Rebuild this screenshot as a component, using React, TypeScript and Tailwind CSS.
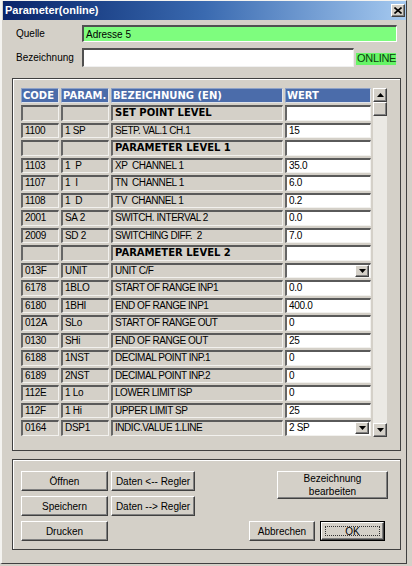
import React from 'react';

interface Row {
  code?: string;
  param?: string;
  name: string;
  value?: string;
  section?: boolean;
  drop?: boolean;
}

const rows: Row[] = [
  { name: 'SET POINT LEVEL', section: true },
  { code: '1100', param: '1 SP', name: 'SETP. VAL.1 CH.1', value: '15' },
  { name: 'PARAMETER LEVEL 1', section: true },
  { code: '1103', param: '1  P', name: 'XP  CHANNEL 1', value: '35.0' },
  { code: '1107', param: '1  I', name: 'TN  CHANNEL 1', value: '6.0' },
  { code: '1108', param: '1  D', name: 'TV  CHANNEL 1', value: '0.2' },
  { code: '2001', param: 'SA 2', name: 'SWITCH. INTERVAL 2', value: '0.0' },
  { code: '2009', param: 'SD 2', name: 'SWITCHING DIFF.  2', value: '7.0' },
  { name: 'PARAMETER LEVEL 2', section: true },
  { code: '013F', param: 'UNIT', name: 'UNIT C/F', value: '', drop: true },
  { code: '6178', param: '1BLO', name: 'START OF RANGE INP1', value: '0.0' },
  { code: '6180', param: '1BHI', name: 'END OF RANGE INP1', value: '400.0' },
  { code: '012A', param: 'SLo', name: 'START OF RANGE OUT', value: '0' },
  { code: '0130', param: 'SHi', name: 'END OF RANGE OUT', value: '25' },
  { code: '6188', param: '1NST', name: 'DECIMAL POINT INP.1', value: '0' },
  { code: '6189', param: '2NST', name: 'DECIMAL POINT INP.2', value: '0' },
  { code: '112E', param: '1 Lo', name: 'LOWER LIMIT ISP', value: '0' },
  { code: '112F', param: '1 Hi', name: 'UPPER LIMIT SP', value: '25' },
  { code: '0164', param: 'DSP1', name: 'INDIC.VALUE 1.LINE', value: '2 SP', drop: true },
];

const cell =
  'h-[15.5px] flex items-center pl-[2px] whitespace-pre border-t-2 border-l-2 border-t-[#5a5a5a] border-l-[#666666] border-b border-r border-b-[#f2f1ee] border-r-[#f2f1ee] text-[10px] leading-none text-black overflow-hidden';

const raised =
  'bg-[#d4d0c8] border border-t-white border-l-white border-r-[#404040] border-b-[#404040] shadow-[inset_-1px_-1px_0_#808080]';

function Arrow({ up }: { up?: boolean }) {
  return (
    <svg width="7" height="4" viewBox="0 0 7 4">
      <path d={up ? 'M3.5 0 L7 4 L0 4 Z' : 'M0 0 L7 0 L3.5 4 Z'} fill="#000" />
    </svg>
  );
}

function Btn({ children, className }: { children: React.ReactNode; className: string }) {
  return (
    <div className={`${raised} flex items-center justify-center text-[10px] leading-[13px] text-black text-center ${className}`}>
      {children}
    </div>
  );
}

export default function App() {
  return (
    <div className="w-[412px] h-[566px] bg-[#d4d0c8] font-['Liberation_Sans',Arial,sans-serif] overflow-hidden">
      <div className="w-[407px] h-[564px] border-r border-b border-r-[#404040] border-b-[#404040] border-l-2 border-t border-l-[#f4f3f0] border-t-[#f4f3f0] pl-px">
        {/* Title bar */}
        <div className="h-[19px] w-[403px] bg-gradient-to-r from-[#0a246a] via-[#3a6ab0] to-[#a6caf0] flex items-center justify-between pl-[2px] pr-[1px]">
          <span className="text-white font-bold text-[11px]">Parameter(online)</span>
          <div className={`${raised} w-[14px] h-[13px] flex items-center justify-center`}>
            <svg width="8" height="7" viewBox="0 0 8 7">
              <path d="M0.5 0.5 L7.5 6.5 M7.5 0.5 L0.5 6.5" stroke="#000" strokeWidth="1.6" />
            </svg>
          </div>
        </div>

        {/* Quelle */}
        <div className="flex items-center mt-[5px] h-[17px]">
          <span className="w-[79px] pl-[13px] text-[10px] text-black">Quelle</span>
          <div className="w-[315px] h-[17px] bg-[#7efd7e] border-t-2 border-l-2 border-t-[#505050] border-l-[#505050] border-b border-r border-b-white border-r-white flex items-center pl-[2px] text-[10px] text-black">
            Adresse 5
          </div>
        </div>

        {/* Bezeichnung */}
        <div className="flex items-center mt-[6px] h-[19px]">
          <span className="w-[79px] pl-[13px] text-[10px] text-black">Bezeichnung</span>
          <div className="w-[272px] h-[19px] bg-white border-t-2 border-l-2 border-t-[#505050] border-l-[#505050] border-b border-r border-b-[#f0f0f0] border-r-[#f0f0f0]" />
          <div className="ml-[2px] mt-[2px] w-[40px] h-[12px] bg-[#66f566] flex items-center pl-[1px] text-[11px] leading-none text-[#0b3d0b] tracking-[-0.3px]">
            ONLINE
          </div>
        </div>

        {/* Table group */}
        <div className="ml-[9px] mt-[11px] w-[389px] h-[373px] border border-[#404040] shadow-[inset_1px_1px_0_#ffffff] pl-[8px] pt-[9px] flex gap-[2px]">
          <div className="grid grid-cols-[38px_48px_172px_86px] gap-x-[2px] gap-y-[2px] content-start">
            {['CODE', 'PARAM.', 'BEZEICHNUNG (EN)', 'WERT'].map((h) => (
              <div
                key={h}
                className="h-[15px] bg-[#4b6caa] border border-t-[#8ea2c8] border-l-[#8ea2c8] border-b-[#dfe3ea] border-r-[#dfe3ea] flex items-center pl-px text-white font-bold text-[10px] leading-none font-['DejaVu_Sans',sans-serif]"
              >
                {h}
              </div>
            ))}
            {rows.map((r, i) => (
              <React.Fragment key={i}>
                <div className={`${cell} bg-[#d4d0c8] tracking-[-0.3px]`}>{r.code}</div>
                <div className={`${cell} bg-[#d4d0c8] tracking-[-0.3px]`}>{r.param}</div>
                <div
                  className={`${cell} bg-[#d4d0c8] ${
                    r.section ? "font-bold font-['DejaVu_Sans',sans-serif]" : 'tracking-[-0.45px]'
                  }`}
                >
                  {r.name}
                </div>
                <div className={`${cell} bg-white justify-between pr-[1px] tracking-[-0.3px]`}>
                  <span>{r.value}</span>
                  {r.drop && (
                    <div className={`${raised} w-[14px] h-[12px] flex items-center justify-center`}>
                      <Arrow />
                    </div>
                  )}
                </div>
              </React.Fragment>
            ))}
          </div>

          {/* Scrollbar */}
          <div className="w-[14px] h-[349px] flex flex-col bg-[#ebe9e4]">
            <div className={`${raised} h-[14px] flex items-center justify-center`}>
              <Arrow up />
            </div>
            <div className={`${raised} h-[14px]`} />
            <div className="flex-1" />
            <div className={`${raised} h-[14px] flex items-center justify-center`}>
              <Arrow />
            </div>
          </div>
        </div>

        {/* Button group */}
        <div className="ml-[9px] mt-[8px] w-[389px] h-[91px] border border-[#404040] shadow-[inset_1px_1px_0_#ffffff] pl-[8px] pt-[11px] flex">
          <div className="grid grid-cols-[87px_84px] gap-x-[3px] gap-y-[5px] content-start">
            <Btn className="h-[20px]">Öffnen</Btn>
            <Btn className="h-[20px]">Daten &lt;-- Regler</Btn>
            <Btn className="h-[20px]">Speichern</Btn>
            <Btn className="h-[20px]">Daten --&gt; Regler</Btn>
            <Btn className="h-[20px]">Drucken</Btn>
          </div>
          <div className="flex-1 flex flex-col items-end pr-[12px]">
            <Btn className="w-[111px] h-[28px]">
              Bezeichnung
              <br />
              bearbeiten
            </Btn>
            <div className="flex gap-[5px] mt-[22px] mr-[3px]">
              <Btn className="w-[66px] h-[20px]">Abbrechen</Btn>
              <div className="w-[65px] h-[20px] border border-black">
                <div className={`${raised} w-full h-full p-[3px]`}>
                  <div className="w-full h-full border border-dotted border-[#333] flex items-center justify-center text-[10px] text-black">
                    OK
                  </div>
                </div>
              </div>
            </div>
          </div>
        </div>
      </div>
    </div>
  );
}
